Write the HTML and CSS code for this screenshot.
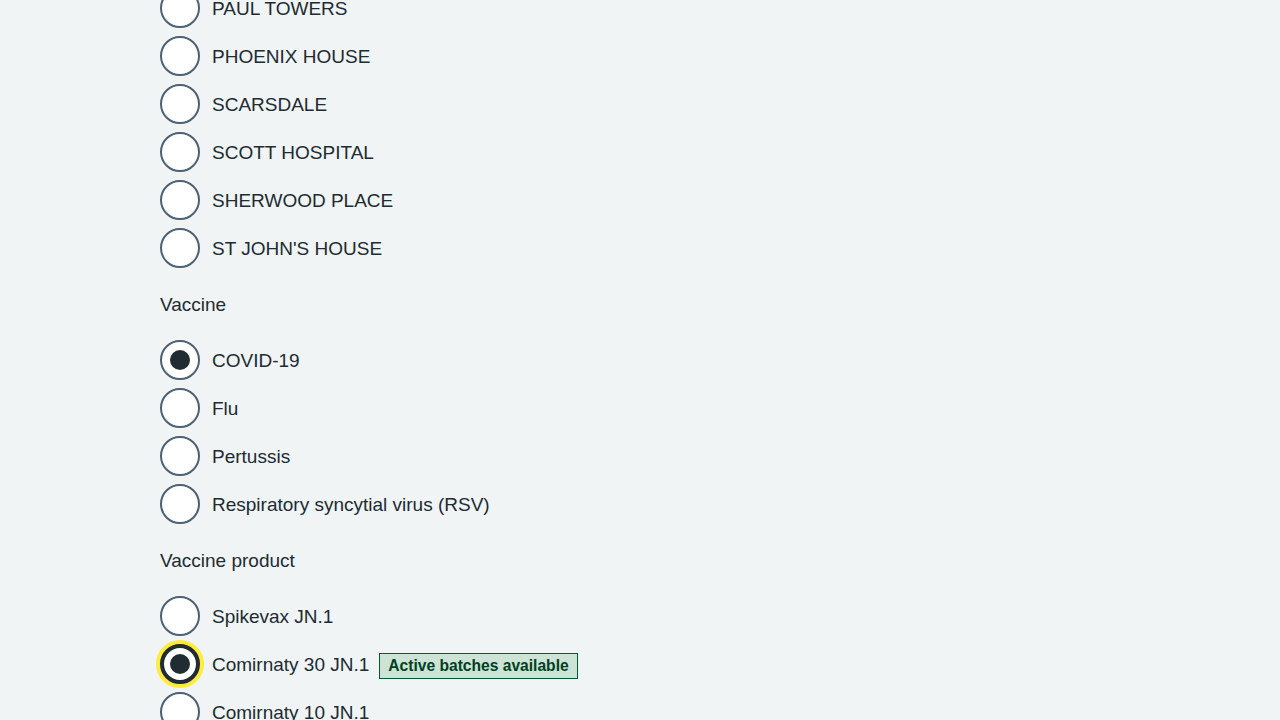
FILE: index.html
```html
<!DOCTYPE html>
<html lang="en">
<head>
<meta charset="utf-8">
<title>Vaccine form</title>
<link rel="stylesheet" href="styles.css">
</head>
<body>
<main class="page">
  <fieldset class="group">
    <div class="radios">
      <label class="item"><span class="radio"></span><span class="text">PAUL TOWERS</span></label>
      <label class="item"><span class="radio"></span><span class="text">PHOENIX HOUSE</span></label>
      <label class="item"><span class="radio"></span><span class="text">SCARSDALE</span></label>
      <label class="item"><span class="radio"></span><span class="text">SCOTT HOSPITAL</span></label>
      <label class="item"><span class="radio"></span><span class="text">SHERWOOD PLACE</span></label>
      <label class="item"><span class="radio"></span><span class="text">ST JOHN'S HOUSE</span></label>
    </div>
  </fieldset>
  <fieldset class="group">
    <legend class="legend">Vaccine</legend>
    <div class="radios">
      <label class="item"><span class="radio checked"></span><span class="text">COVID-19</span></label>
      <label class="item"><span class="radio"></span><span class="text">Flu</span></label>
      <label class="item"><span class="radio"></span><span class="text">Pertussis</span></label>
      <label class="item"><span class="radio"></span><span class="text">Respiratory syncytial virus (RSV)</span></label>
    </div>
  </fieldset>
  <fieldset class="group">
    <legend class="legend">Vaccine product</legend>
    <div class="radios">
      <label class="item"><span class="radio"></span><span class="text">Spikevax JN.1</span></label>
      <label class="item"><span class="radio checked focused"></span><span class="text">Comirnaty 30 JN.1</span><span class="tag">Active batches available</span></label>
      <label class="item"><span class="radio"></span><span class="text">Comirnaty 10 JN.1</span></label>
    </div>
  </fieldset>
</main>
</body>
</html>
```

FILE: styles.css
```css
* { box-sizing: border-box; }
html, body { margin: 0; padding: 0; }
body {
  background: #f0f4f5;
  color: #212b32;
  font-family: "Liberation Sans", Arial, sans-serif;
  font-size: 19px;
  line-height: 28px;
  height: 720px;
  overflow: hidden;
}
.page {
  padding-left: 160px;
  margin-top: -12px;
}
.group {
  border: 0;
  margin: 0 0 22px 0;
  padding: 0;
  min-width: 0;
}
.legend {
  padding: 1px 0 0 0;
  margin: 0 0 21px 0;
  font-size: 19px;
  line-height: 28px;
}
.radios {
  display: flex;
  flex-direction: column;
  gap: 8px;
}
.item {
  display: flex;
  align-items: center;
  min-height: 40px;
}
.radio {
  flex: none;
  width: 40px;
  height: 40px;
  border: 2px solid #4c6272;
  border-radius: 50%;
  background: #ffffff;
  display: flex;
  align-items: center;
  justify-content: center;
}
.radio.checked::after {
  content: "";
  width: 20px;
  height: 20px;
  border-radius: 50%;
  background: #212b32;
}
.radio.focused {
  border: 4px solid #212b32;
  box-shadow: 0 0 0 4px #ffeb3b;
}
.text {
  padding-left: 12px;
  padding-top: 2px;
}
.tag {
  margin-left: 10px;
  margin-top: 4px;
  font-size: 15.6px;
  font-weight: 700;
  line-height: 24px;
  padding: 0 8px;
  color: #00401e;
  background: #cce3d6;
  border: 1px solid #005a2c;
}
```
